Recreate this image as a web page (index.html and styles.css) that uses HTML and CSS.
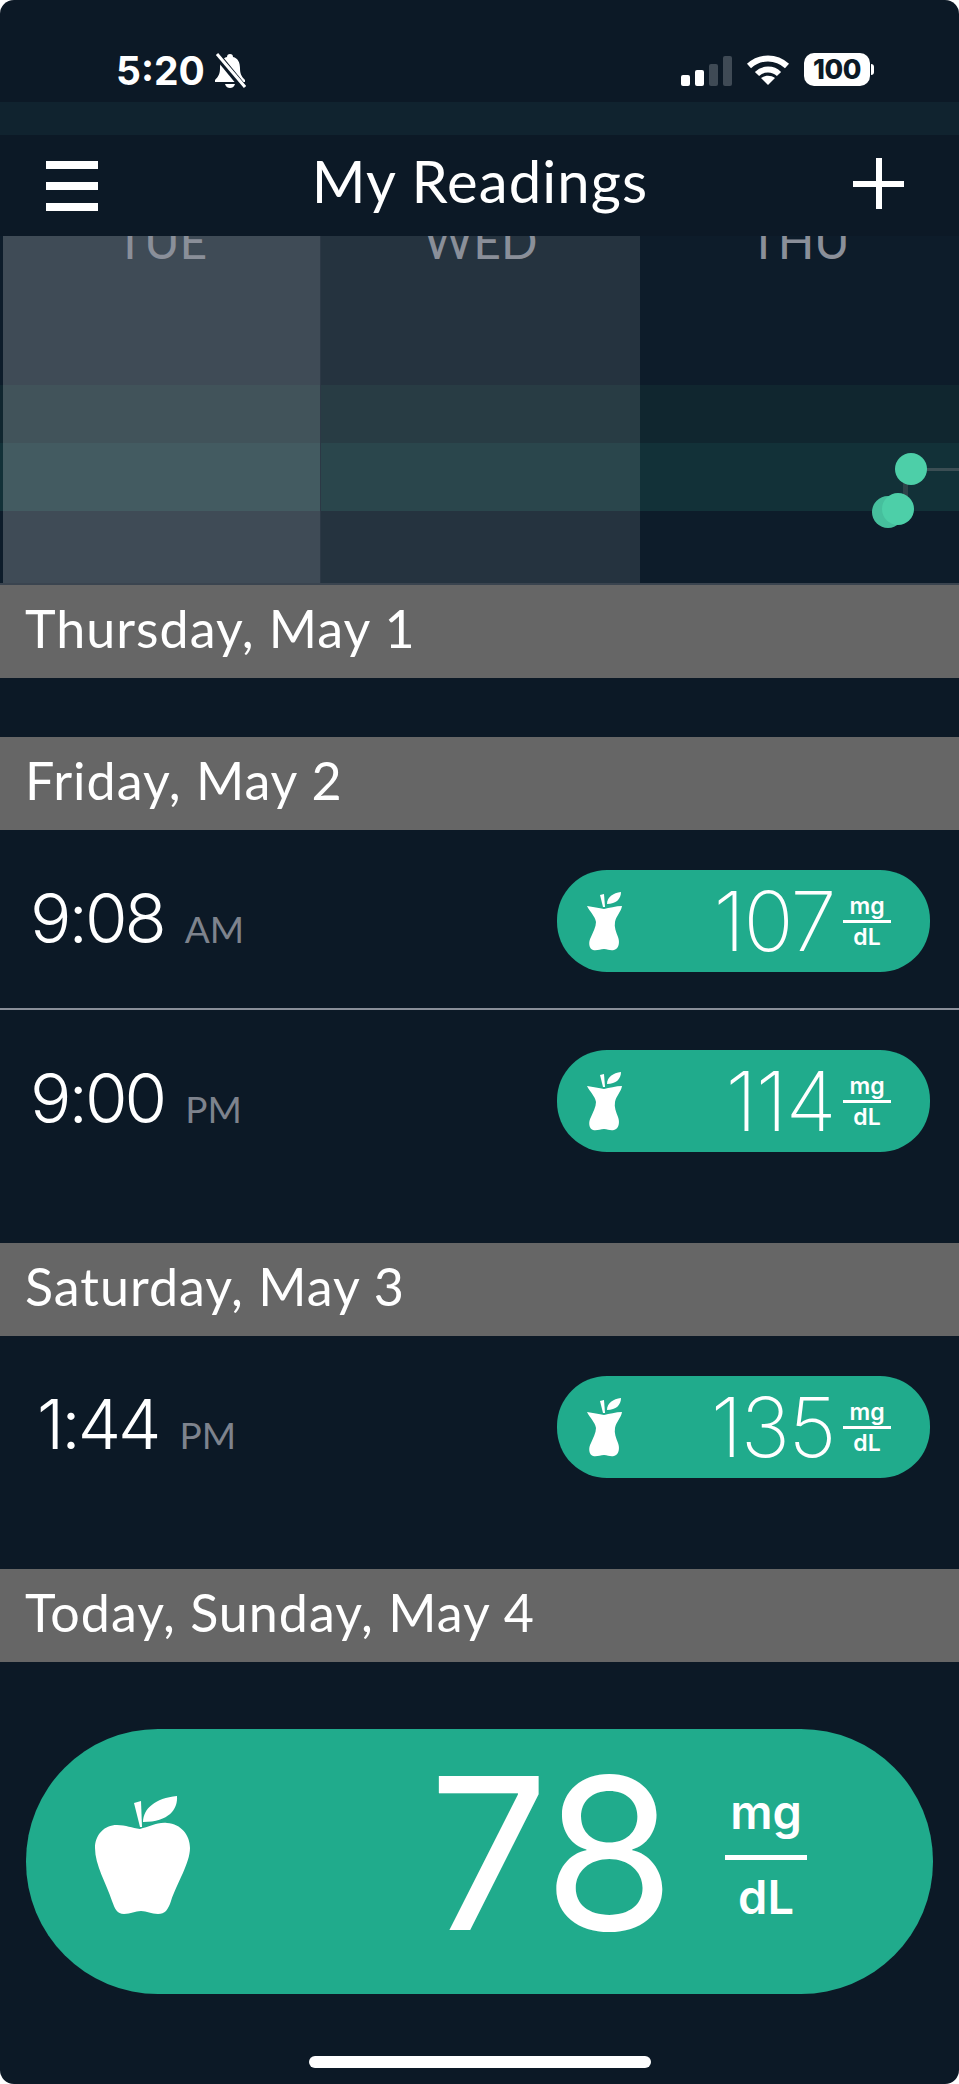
FILE: index.html
```html
<!DOCTYPE html>
<html lang="en">
<head>
  <meta charset="UTF-8" />
  <meta name="viewport" content="width=device-width, initial-scale=1.0" />
  <title>My Readings</title>
  <link rel="stylesheet" href="styles.css">
</head>

<body>
  <svg class="defs" width="0" height="0" aria-hidden="true">
    <symbol id="apple" viewBox="0 0 95 120">
      <path d="M45 34C54 32 62 27 72 28C86 29 95 40 95 53C95 68 82 88 76 106C73 115 70 119 63 119C56 119 52 116 46 116C40 116 36 119 29 119C22 119 20 114 17 106C11 88 0 70 0 53C0 40 9 30 22 30C31 30 37 33 45 34Z"/>
      <path d="M39 8L46 6L47 32H45Z"/>
      <path d="M48 27C48 14 60 3 82 1C83 14 74 27 48 27Z"/>
    </symbol>
    <symbol id="core" viewBox="0 0 35 59">
      <path d="M0 14C6 15 12 16 17 17C22 16 29 14 35 14C34 20 29 24 28 30C27 35 29 40 31 45C33 50 32 57 27 58C23 59 21 57 17 57C13 57 10 59 6 58C2 57 1 50 4 45C6 40 9 35 9 30C8 24 3 20 0 14Z"/>
      <path d="M13 3L17 2L18 15H16Z"/>
      <path d="M20 12C20 5 26 1 34 0C34 7 29 12 20 12Z"/>
    </symbol>
  </svg>

  <div class="screen">
    <!-- status bar -->
    <div class="status">
      <div class="status-left">
        <span class="clock">5:20</span>
        <svg class="bell" viewBox="0 0 32 35" width="32" height="35">
          <path d="M16 1C18 1 19 2 19 4C24 5 26 10 26 15C26 20 27 23 31 27V29H1V27C5 23 6 20 6 15C6 10 8 5 13 4C13 2 14 1 16 1Z" fill="#fff"/>
          <path d="M11 31H21C20 34 18 35 16 35C14 35 12 34 11 31Z" fill="#fff"/>
          <path d="M2 1L30 35" stroke="#0c1926" stroke-width="7"/>
          <path d="M3 1L31 34" stroke="#fff" stroke-width="3"/>
        </svg>
      </div>
      <div class="status-right">
        <div class="signal">
          <span class="bar bar-1"></span>
          <span class="bar bar-2"></span>
          <span class="bar bar-3"></span>
          <span class="bar bar-4"></span>
        </div>
        <svg class="wifi" viewBox="0 0 44 31" width="44" height="31" fill="none" stroke="#fff" stroke-width="6">
          <path d="M3 12C14 2 30 2 41 12"/>
          <path d="M11 20C17 14 27 14 33 20"/>
          <path d="M22 31L15 24C19 21 25 21 29 24Z" fill="#fff" stroke="none"/>
        </svg>
        <div class="battery"><span class="battery-level">100</span></div>
      </div>
    </div>
    <div class="band"></div>

    <!-- nav -->
    <header class="nav">
      <div class="menu"><span></span><span></span><span></span></div>
      <h1>My Readings</h1>
      <div class="plus"></div>
    </header>

    <!-- chart, scrolled so the day labels are cut off -->
    <div class="chart">
      <div class="range range-a"></div>
      <div class="range range-b"></div>
      <div class="chart-col col-tue"><span>TUE</span></div>
      <div class="chart-col col-wed"><span>WED</span></div>
      <div class="chart-col col-thu"><span>THU</span></div>
      <div class="trend"></div>
      <div class="link"></div>
      <div class="dot dot-a"></div>
      <div class="dot dot-b"></div>
      <div class="dot dot-c"></div>
    </div>

    <h2 class="day-title">Thursday, May 1</h2>
    <div class="day-empty"></div>

    <h2 class="day-title">Friday, May 2</h2>
    <div class="reading reading-first">
      <div class="time">9:08<small>AM</small></div>
      <div class="pill">
        <svg class="core"><use href="#core"/></svg>
        <span class="value">107</span>
        <div class="unit"><span>mg</span><span class="unit-low">dL</span></div>
      </div>
    </div>
    <div class="reading reading-last">
      <div class="time">9:00<small>PM</small></div>
      <div class="pill">
        <svg class="core"><use href="#core"/></svg>
        <span class="value">114</span>
        <div class="unit"><span>mg</span><span class="unit-low">dL</span></div>
      </div>
    </div>

    <h2 class="day-title">Saturday, May 3</h2>
    <div class="reading reading-last">
      <div class="time time-one">1:44<small>PM</small></div>
      <div class="pill">
        <svg class="core"><use href="#core"/></svg>
        <span class="value">135</span>
        <div class="unit"><span>mg</span><span class="unit-low">dL</span></div>
      </div>
    </div>

    <h2 class="day-title">Today, Sunday, May 4</h2>
    <div class="latest">
      <svg class="apple"><use href="#apple"/></svg>
      <span class="latest-value">78</span>
      <div class="latest-unit"><span class="latest-mg">mg</span><span class="unit-low">dL</span></div>
    </div>

    <div class="home-bar"></div>
  </div>
</body>
</html>
```

FILE: styles.css
```css
* {
  box-sizing: border-box;
}

html, body {
  margin: 0;
  padding: 0;
  background: #fff;
}

body {
  font-family: Lato, "Open Sans", sans-serif;
  color: #fff;
}

.defs {
  position: absolute;
}

.screen {
  width: 959px;
  height: 2084px;
  background: #0c1926;
  border-radius: 14px;
  overflow: hidden;
  display: flex;
  flex-direction: column;
}

/* status bar */
.status {
  height: 102px;
  flex: none;
  display: flex;
  justify-content: space-between;
  align-items: flex-start;
  padding: 52px 89px 0 116px;
}

.status-left {
  display: flex;
  align-items: center;
  gap: 9px;
}

.clock {
  font-family: Inter, sans-serif;
  font-weight: 700;
  font-size: 39px;
  line-height: 37px;
}

.status-right {
  display: flex;
  align-items: center;
  height: 34px;
  gap: 14px;
}

.signal {
  display: flex;
  align-items: flex-end;
  gap: 5px;
  height: 30px;
  margin-top: 3px;
}

.bar {
  width: 9px;
  border-radius: 2px;
  background: #fff;
}

.bar-1 { height: 11px; }
.bar-2 { height: 16px; }
.bar-3 { height: 22px; background: #3f4a55; }
.bar-4 { height: 30px; background: #3f4a55; }

.battery {
  position: relative;
  width: 66px;
  height: 33px;
  background: #fff;
  border-radius: 10px;
  display: flex;
  align-items: center;
  justify-content: center;
}

.battery::after {
  content: "";
  position: absolute;
  right: -4px;
  top: 11px;
  width: 3px;
  height: 11px;
  background: #fff;
  border-radius: 0 3px 3px 0;
}

.battery-level {
  font-family: Inter, sans-serif;
  font-weight: 800;
  font-size: 27px;
  color: #0c1926;
  letter-spacing: -0.5px;
}

.band {
  height: 33px;
  flex: none;
  background: #10232f;
}

/* nav */
.nav {
  height: 101px;
  flex: none;
  display: flex;
  align-items: center;
  justify-content: space-between;
  padding: 0 55px 0 46px;
}

.nav h1 {
  margin: -9px 0 0 9px;
  font-size: 58px;
  font-weight: 400;
  line-height: 60px;
  letter-spacing: 1.1px;
}

.menu {
  width: 52px;
  display: flex;
  flex-direction: column;
  gap: 13px;
}

.menu span {
  height: 8px;
  background: #fff;
}

.plus {
  width: 51px;
  height: 51px;
  margin-top: -4px;
  background:
    linear-gradient(#fff, #fff) center / 100% 6px no-repeat,
    linear-gradient(#fff, #fff) center / 6px 100% no-repeat;
  border-radius: 3px;
}

/* chart */
.chart {
  position: relative;
  height: 349px;
  flex: none;
  display: grid;
  grid-template-columns: 321px 319px 319px;
  overflow: hidden;
  background: #0d1c2a;
  border-bottom: 2px solid #3a444f;
}

.chart-col {
  position: relative;
  text-align: center;
  color: #8a8f99;
  font-size: 48px;
  line-height: 48px;
}

.chart-col span {
  display: block;
  margin-top: -19px;
}

.col-tue {
  background: rgba(255, 255, 255, 0.207);
  margin-left: 3px;
  border-right: 1px solid #2c3845;
}

.col-wed {
  background: rgba(255, 255, 255, 0.1);
}

.range {
  position: absolute;
  left: 0;
  right: 0;
}

.range-a {
  top: 149px;
  height: 58px;
  background: #10262f;
}

.range-b {
  top: 207px;
  height: 68px;
  background: #123138;
}

.trend {
  position: absolute;
  top: 232px;
  left: 911px;
  right: 0;
  height: 3px;
  background: #3b4e54;
}

.link {
  position: absolute;
  top: 245px;
  left: 903px;
  width: 5px;
  height: 24px;
  background: #2e4348;
}

.dot {
  position: absolute;
  width: 32px;
  height: 32px;
  border-radius: 50%;
  background: #4dcfa8;
}

.dot-a { left: 895px; top: 217px; }
.dot-b { left: 872px; top: 260px; background: #46bf9d; }
.dot-c { left: 882px; top: 257px; }

/* day lists */
.day-title {
  margin: 0;
  height: 93px;
  flex: none;
  background: #666;
  font-size: 52px;
  font-weight: 400;
  line-height: 86px;
  letter-spacing: 1px;
  padding-left: 25px;
}

.day-empty {
  height: 59px;
  flex: none;
}

.reading {
  flex: none;
  display: flex;
  justify-content: space-between;
  padding: 40px 29px 0 30px;
}

.reading-first {
  height: 180px;
  border-bottom: 2px solid #8a8f99;
}

.reading-last {
  height: 233px;
}

.time {
  font-family: Inter, sans-serif;
  font-size: 69px;
  font-weight: 300;
  line-height: 96px;
  letter-spacing: -3px;
}

.time small {
  font-family: Lato, sans-serif;
  font-size: 37px;
  font-weight: 400;
  letter-spacing: 0;
  color: #7e838d;
  margin-left: 21px;
}

.time-one {
  padding-left: 7px;
}

.pill {
  width: 373px;
  height: 102px;
  background: #20ab8c;
  border-radius: 50px;
  display: flex;
  align-items: center;
  padding: 0 39px 0 30px;
}

.core {
  width: 35px;
  height: 59px;
  fill: #fff;
}

.value {
  margin-left: auto;
  font-family: Inter, sans-serif;
  font-size: 83px;
  font-weight: 200;
  line-height: 100px;
  letter-spacing: -1.5px;
}

.unit {
  width: 48px;
  margin-left: 8px;
  display: flex;
  flex-direction: column;
  align-items: center;
  font-family: Inter, sans-serif;
  font-size: 23px;
  font-weight: 600;
  line-height: 28px;
}

.unit-low {
  width: 100%;
  text-align: center;
  border-top: 3px solid #fff;
}

/* latest reading */
.latest {
  height: 265px;
  flex: none;
  margin: 67px 26px 0 26px;
  background: #20ab8c;
  border-radius: 132px;
  display: flex;
  align-items: center;
  padding: 0 126px 0 69px;
}

.apple {
  width: 95px;
  height: 120px;
  fill: #fff;
  margin-top: -14px;
}

.latest-value {
  margin-left: auto;
  margin-top: -18px;
  font-family: Inter, sans-serif;
  font-size: 212px;
  font-weight: 400;
  line-height: 240px;
  letter-spacing: -2px;
}

.latest-unit {
  width: 82px;
  margin-left: 52px;
  margin-top: -14px;
  display: flex;
  flex-direction: column;
  align-items: center;
  font-family: Inter, sans-serif;
  font-size: 47px;
  font-weight: 600;
  line-height: 60px;
}

.latest-mg {
  padding-bottom: 13px;
}

.latest-unit .unit-low {
  border-top-width: 5px;
  padding-top: 7px;
}

.home-bar {
  width: 342px;
  height: 12px;
  flex: none;
  margin: 62px auto 0;
  background: #fff;
  border-radius: 6px;
}
```
